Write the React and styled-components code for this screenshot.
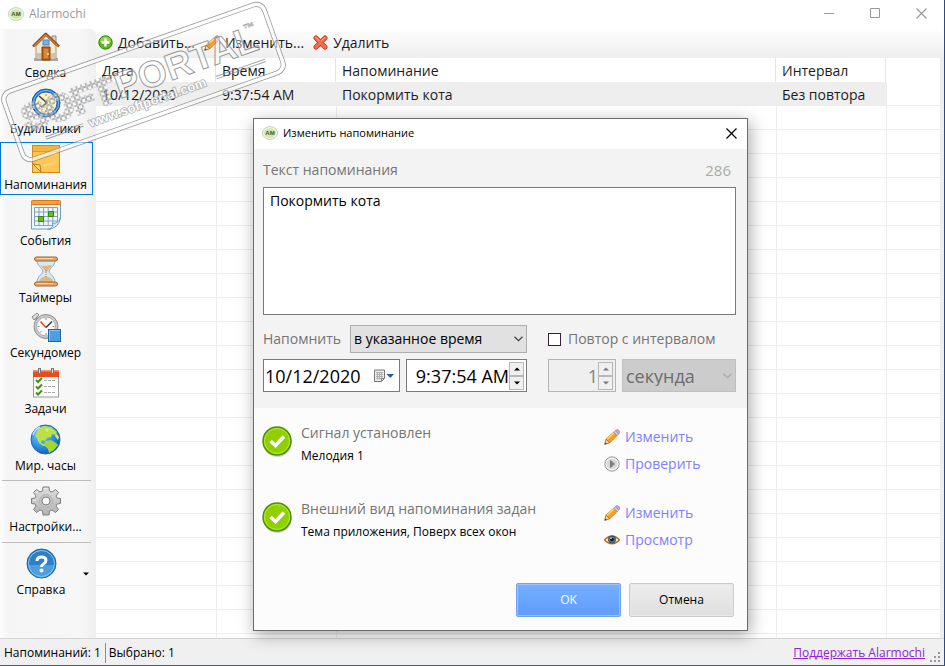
import React, { useState } from "react";
import styled, { createGlobalStyle } from "styled-components";

const GlobalStyle = createGlobalStyle`
  * {
    box-sizing: border-box;
  }
  body {
    margin: 0;
    font-family: "Open Sans", "Noto Sans", sans-serif;
    font-size: 14px;
    line-height: 20px;
    color: #1c1c1c;
  }
  button, input, select, textarea {
    font: inherit;
    color: inherit;
    margin: 0;
    border-radius: 0;
  }
  button {
    padding: 0;
    border: 0;
    background: none;
  }
  svg {
    display: block;
    flex: none;
  }
`;

const Window = styled.div`
  position: relative;
  display: flex;
  flex-direction: column;
  height: 100vh;
  overflow: hidden;
  background: #fff;
  border-right: 1px solid #2b4a87;
  border-bottom: 1px solid #2d6392;
`;

const TitleBar = styled.header`
  display: flex;
  align-items: center;
  height: 29px;
  padding: 0 0 2px 8px;
  gap: 5px;
  color: #999;
  background: #fff;

  h1 {
    flex: 1;
    margin: 0;
    font-size: 12px;
    font-weight: normal;
  }
`;

const WindowControls = styled.div`
  display: flex;
`;

const WindowButton = styled.button`
  display: flex;
  align-items: center;
  justify-content: center;
  width: 46px;
  height: 27px;
`;

const Body = styled.div`
  display: flex;
  flex: 1;
  min-height: 0;
`;

const Sidebar = styled.nav`
  display: flex;
  flex-direction: column;
  gap: 3px;
  width: 96px;
  padding: 1px 3px 0 0;
  border-top-right-radius: 6px;
  background: linear-gradient(90deg, #fdfdfd 0, #f5f5f5 8px, #f7f7f7 80px, #efefef 96px);
`;

const SideButton = styled.button`
  display: flex;
  align-items: center;
  height: 53px;
  font-size: 12px;
  line-height: 16px;
  color: #000;
  border: 1px solid ${(p) => (p.$active ? "#0078d7" : "transparent")};

  .main {
    display: flex;
    flex: 1;
    flex-direction: column;
    align-items: center;
    gap: 3px;
    padding-right: 2px;
  }
  .arrow {
    width: 9px;
    padding-top: 2px;
  }
`;

const SideDivider = styled.hr`
  width: 89px;
  height: 1px;
  margin: 2px 0 0 2px;
  border: 0;
  background: #bdbdbd;
`;

const Content = styled.main`
  display: flex;
  flex: 1;
  flex-direction: column;
  min-width: 0;
`;

const Toolbar = styled.div`
  display: flex;
  align-items: center;
  gap: 9px;
  height: 29px;
  padding: 0 2px 2px;
  background: linear-gradient(#fefefe, #eee);
`;

const ToolButton = styled.button`
  display: flex;
  align-items: center;
  gap: 5px;
  white-space: nowrap;
`;

const ListArea = styled.div`
  flex: 1;
  min-height: 0;
  overflow: hidden;
  margin-right: 4px;
  box-shadow: 4px 0 0 #eee;
`;

const ReminderTable = styled.table`
  width: 100%;
  table-layout: fixed;
  border-collapse: separate;
  border-spacing: 0;

  th, td {
    height: 24px;
    padding: 2px 6px 0;
    text-align: left;
    font-weight: normal;
    line-height: 20px;
    white-space: nowrap;
  }
  th:not(:last-child) {
    border-right: 1px solid #e5e5e5;
  }
  td {
    border-bottom: 1px solid #ededed;
  }
  td + td {
    border-left: 1px solid #ededed;
    padding-left: 5px;
  }
  tr.selected td:not(:last-child) {
    background: #eee;
  }
`;

const StatusBar = styled.footer`
  display: flex;
  align-items: center;
  height: 27px;
  padding: 2px 3px 0 4px;
  border-top: 1px solid #d4d4d4;
  background: #f0f0f0;
  font-size: 12px;
  color: #000;

  span + span {
    margin-left: 4px;
    padding-left: 3px;
    border-left: 1px solid #8c8c8c;
  }
  a {
    margin: 0 5px 0 auto;
    color: #9321dd;
  }
  svg {
    align-self: flex-end;
    margin-bottom: 2px;
  }
`;

const Dialog = styled.section`
  position: absolute;
  top: 118px;
  left: 253px;
  width: 495px;
  border: 1px solid #6c6c6c;
  background: #fcfcfc;
  box-shadow: 2px 4px 16px rgba(0, 0, 0, 0.35);
`;

const DialogTitle = styled.header`
  display: flex;
  align-items: center;
  gap: 5px;
  height: 30px;
  padding: 0 0 2px 8px;
  background: #fff;
  color: #000;

  h2 {
    flex: 1;
    margin: 0;
    font-size: 11px;
    font-weight: normal;
  }
  button {
    width: 30px;
    height: 28px;
    padding-left: 9px;
  }
`;

const DialogForm = styled.div`
  display: flex;
  flex-direction: column;
  height: 259px;
  padding: 11px 11px 0 9px;
  background: #f3f3f3;
`;

const FieldHead = styled.div`
  display: flex;
  justify-content: space-between;
  padding-right: 5px;
  color: #757575;

  output {
    font-size: 15px;
    color: #a7ada9;
  }
`;

const MessageBox = styled.textarea`
  height: 128px;
  margin: 7px 0 10px;
  padding: 3px 6px;
  border: 1px solid #7a7a7a;
  background: #fff;
  color: #000;
  resize: none;
  outline: 0;
`;

const FormGrid = styled.div`
  display: grid;
  grid-template-columns: 264px 1fr;
  column-gap: 21px;
  row-gap: 6px;
`;

const FormRow = styled.div`
  display: flex;
  align-items: center;
  justify-content: space-between;
  gap: 6px;
  color: #757575;
`;

const SelectWrap = styled.div`
  display: grid;
  flex: ${(p) => (p.$grow ? 1 : "none")};
  width: ${(p) => (p.$grow ? "auto" : "177px")};
  align-items: center;

  select, svg {
    grid-area: 1 / 1;
  }
  svg {
    justify-self: end;
    margin-right: 4px;
    pointer-events: none;
  }
`;

const Select = styled.select`
  appearance: none;
  width: 100%;
  height: ${(p) => (p.$large ? 33 : 28)}px;
  padding: 0 3px;
  border: 1px solid #adadad;
  background: #e1e1e1;
  color: #000;
  font-size: ${(p) => (p.$large ? 18 : 14)}px;
  outline: 0;

  &:disabled {
    border-color: #bfbfbf;
    background: #ccc;
    color: #6d6d6d;
    opacity: 1;
  }
`;

const CheckLabel = styled.label`
  display: flex;
  align-items: center;
  gap: 7px;
  white-space: nowrap;

  input {
    appearance: none;
    width: 13px;
    height: 13px;
    border: 1px solid #33203a;
    background: #fff;
  }
  input:checked {
    box-shadow: inset 0 0 0 2px #fff;
    background: #33203a;
  }
`;

const Field = styled.div`
  display: flex;
  align-items: center;
  width: ${(p) => p.$width}px;
  height: 33px;
  border: 1px solid ${(p) => (p.$disabled ? "#b5b5b5" : "#7a7a7a")};
  background: ${(p) => (p.$disabled ? "#efefef" : "#fff")};
  color: ${(p) => (p.$disabled ? "#858585" : "#000")};

  input {
    flex: 1;
    min-width: 0;
    height: 29px;
    padding: 0 0 0 1px;
    border: 0;
    background: none;
    font-size: 18px;
    text-align: ${(p) => p.$align || "left"};
    outline: 0;
  }
`;

const Spinner = styled.div`
  display: flex;
  flex-direction: column;
  margin-right: 2px;

  button {
    display: flex;
    align-items: center;
    justify-content: center;
    width: 15px;
    height: 14px;
    border: 1px solid #b8b8b8;
    background: #f0f0f0;
  }
`;

const DateButton = styled.button`
  display: flex;
  align-items: center;
  gap: 2px;
  margin-right: 5px;
`;

const Options = styled.div`
  display: flex;
  flex-direction: column;
  gap: 25px;
  padding: 15px 11px 0 8px;
`;

const Option = styled.div`
  display: grid;
  grid-template-columns: 31px 1fr 132px;
  column-gap: 8px;

  > svg {
    margin-top: 2px;
  }
  h3 {
    margin: 0;
    font-size: 14px;
    font-weight: normal;
    color: #757575;
  }
  p {
    margin: 4px 0 0;
    font-size: 12px;
    line-height: 18px;
    color: #000;
  }
`;

const Links = styled.div`
  display: flex;
  flex-direction: column;
  gap: 7px;
  padding-top: 4px;

  a {
    display: flex;
    align-items: center;
    gap: 5px;
    color: #8080ff;
    text-decoration: none;
  }
`;

const Actions = styled.div`
  display: flex;
  justify-content: flex-end;
  gap: 8px;
  padding: 33px 13px 13px;
`;

const ActionButton = styled.button`
  width: 105px;
  height: 34px;
  border: 1px solid ${(p) => (p.$primary ? "#6fa3ea" : "#cacaca")};
  border-radius: 2px;
  background: ${(p) => (p.$primary ? "linear-gradient(#75b0ff, #609bff)" : "linear-gradient(#eee, #dedede)")};
  box-shadow: inset 0 0 0 1px ${(p) => (p.$primary ? "#9cc5ff" : "#e9e9e9")};
  color: ${(p) => (p.$primary ? "#fff" : "#000")};
  font-size: 12px;
`;

const WatermarkLayer = styled.svg`
  position: absolute;
  top: 0;
  left: 0;
  pointer-events: none;
`;

const AppBadge = () => (
  <svg width="16" height="14" viewBox="0 0 16 14" aria-hidden="true">
    <ellipse cx="8" cy="7" rx="7.5" ry="6.4" fill="#f3f7ea" stroke="#c9ccc4" />
    <ellipse cx="8" cy="7" rx="6" ry="4.8" fill="#cfeaa4" />
    <text x="8" y="9.2" textAnchor="middle" fontFamily="Liberation Sans, sans-serif" fontSize="6" fontWeight="bold" fill="#43543a">AM</text>
  </svg>
);

const HomeIcon = () => (
  <svg width="30" height="30" viewBox="0 0 30 30">
    <path d="M21 4h4v8l-4-4z" fill="#d8d4cc" stroke="#8b8b86" />
    <path d="M3 26h24v3H3z" fill="#aaa9a5" />
    <path d="M5 14 15 4l10 10v13H5z" fill="#f4ead2" stroke="#a5957b" />
    <path d="M2 14.5 14.6 1.8 28 14.5" fill="none" stroke="#a35112" strokeWidth="2.600" strokeLinejoin="round" />
    <path d="M3 14 14.6 2.5 27 14" fill="none" stroke="#dc8a3c" />
    <rect x="12" y="8" width="6" height="5" fill="#75b6eb" stroke="#4d87bf" />
    <path d="M11 28V15h8v13z" fill="#bf6b20" stroke="#783c0c" />
    <path d="M13 17h4v9h-4z" fill="#d88b38" />
    <circle cx="17" cy="22" r="1" fill="#ffe086" />
    <path d="M6 21h4v6H6zM20 21h4v6h-4z" fill="#ccc4ae" />
  </svg>
);

const ClockIcon = () => (
  <svg width="30" height="30" viewBox="0 0 30 30">
    <circle cx="15" cy="15" r="14" fill="#2173c6" stroke="#185a9f" />
    <circle cx="15" cy="15" r="12.6" fill="none" stroke="#7dbef2" />
    <circle cx="15" cy="15" r="11" fill="#fbf1c8" stroke="#2a67a7" />
    <path d="M15 6v2M15 22v2M6 15h2M22 15h2M19.5 7.5l-1 1.7M22.5 10.5l-1.7 1M22.5 19.5l-1.7-1M19.5 22.5l-1-1.7M10.500 22.500l1-1.700M7.500 19.500l1.700-1" stroke="#9b8c5b" />
    <path d="m8 8 7 6 1 1-6 4" fill="none" stroke="#434343" strokeWidth="1.5" />
    <circle cx="15.500" cy="14.500" r="1.500" fill="#333" />
  </svg>
);

const NoteIcon = () => (
  <svg width="30" height="30" viewBox="0 0 30 30">
    <rect x="1.500" y="1.500" width="27" height="27" fill="#ffc653" stroke="#cf8a23" />
    <path d="M2 2h26v5H2z" fill="#f5b43d" />
    <path d="M2 7.500h26" stroke="#e09e2b" />
    <path d="m2 20 8 8M2 20l7 1 1 7" fill="#ffd987" stroke="#c27b18" />
    <path d="m7 12 19-2M12 22l13-4" stroke="#ffd67a" strokeWidth="2" />
  </svg>
);

const CalendarIcon = () => (
  <svg width="30" height="30" viewBox="0 0 30 30">
    <path d="M.5 4h29v25H.5z" fill="#eef7fd" stroke="#6e9cbe" />
    <rect x=".5" y=".5" width="29" height="4" rx="1" fill="#f7a33c" stroke="#d87915" />
    <path d="M3.500 7.500h23v18h-23zM3.500 12h23M3.500 16.500h23M3.500 21h23M8 7.500v18M12.600 7.500v18M17.200 7.500v18M21.800 7.500v18" fill="none" stroke="#82a1bd" />
    <path d="M17.500 11.500h5v5h-5zM7.500 16.500h5v5h-5z" fill="#68bd17" stroke="#378a04" />
    <path d="M30 17v13H17c5-1 6-4 5-7 3 1 7-1 8-6z" fill="#fff" />
    <path d="M29.500 17c-1 5-5 7-8 6 1 3-1 6-5 6.500C24 29 29 24 29.500 17z" fill="#d8eaf8" stroke="#6b9bc3" />
  </svg>
);

const HourglassIcon = () => (
  <svg width="30" height="31" viewBox="0 0 30 31">
    <path d="M6 4h18c0 6-5 8-6 11 1 4 6 5 6 12H6c0-7 5-8 6-12-1-3-6-5-6-11z" fill="#d4eaf9" stroke="#8baeca" />
    <path d="M9 9c4 2 8 0 12 0-1 3-4 4-5 7h-2c0-3-4-5-5-7zM8 26c0-4 5-5 7-6 2 1 7 2 7 6z" fill="#deb785" />
    <path d="M15 14v8" stroke="#b6844f" strokeDasharray="1 1" />
    <rect x="3.500" y="1" width="23" height="4" rx="2" fill="#e2a86b" stroke="#a6622c" />
    <rect x="3.500" y="26" width="23" height="4" rx="2" fill="#e2a86b" stroke="#a6622c" />
    <path d="M6 2.500h16M6 27.500h16" stroke="#ffd7a2" />
  </svg>
);

const StopwatchIcon = () => (
  <svg width="30" height="30" viewBox="0 0 30 30">
    <path d="m1 5 5-4 2 2-5 5z" fill="#ddd" stroke="#8c8c8c" />
    <path d="m5 6 4 4" stroke="#8d8d8d" strokeWidth="3" />
    <circle cx="15" cy="14.500" r="12" fill="#ccc" stroke="#8b8b8b" />
    <circle cx="15" cy="14.500" r="9.500" fill="#fafafa" stroke="#aaa" />
    <path d="M15 6v2M15 21v2M6.500 14.500h2M21.500 14.500h2M9 20.500l1.500-1.500" stroke="#888" />
    <path d="m9.500 9.500 5.500 6" stroke="#e34a18" strokeWidth="1.500" />
    <path d="m15 15.500 6-6" stroke="#333" strokeWidth="1.500" />
    <rect x="17.500" y="17.500" width="12" height="12" fill="#4f9de2" stroke="#1c65a9" />
    <path d="M18.500 28.500v-10h10" fill="none" stroke="#87c4f4" />
  </svg>
);

const TasksIcon = () => (
  <svg width="28" height="30" viewBox="0 0 28 30">
    <rect x="1.500" y="3" width="25" height="26" fill="#fcfcfc" stroke="#9a9a9a" />
    <path d="M1 2.500h26V9H1z" fill="#ee4a19" />
    <path d="M1 3h26" stroke="#ff9e75" />
    <path d="M7.500 0v6M20.500 0v6" stroke="#777" strokeWidth="3" />
    <path d="M7.500 1v4M20.500 1v4" stroke="#ddd" />
    <path d="m4 12 2 2 4-4M4 18.500l2 2 4-4M4 24.500l2 2 4-4" fill="none" stroke="#438f16" strokeWidth="2" />
    <path d="M12 12.500h12M12 18.500h12M12 24.500h12" stroke="#aaa" strokeDasharray="3 1" />
  </svg>
);

const GlobeIcon = () => (
  <svg width="31" height="31" viewBox="0 0 31 31">
    <defs>
      <radialGradient id="ocean" cx=".35" cy=".3" r=".75">
        <stop offset="0" stopColor="#80ccff" />
        <stop offset=".55" stopColor="#2f97e8" />
        <stop offset="1" stopColor="#1158ae" />
      </radialGradient>
    </defs>
    <circle cx="15.500" cy="15.500" r="14.500" fill="url(#ocean)" stroke="#2066b0" />
    <path d="m8 5 6-3 7 1 6 5-2 3-3-1-1 3-4 1-2 3-3-1-1 3 3 1 2 2-3 0-4-3-2-5-2-2z" fill="#bde04a" />
    <path d="m15 17 6-1 5 3 2 2-4 5-5 3-1-4-4-4z" fill="#a6d62f" />
    <path d="m26 9 3 4-1 3-3-4zM17 4l2 2-2 2-2-2z" fill="#d7ec6c" />
    <path d="M3 11Q5 5 10 3" fill="none" stroke="#b6e3ff" strokeWidth="1.500" />
  </svg>
);

const GearIcon = () => (
  <svg width="30" height="30" viewBox="0 0 30 30">
    <defs>
      <linearGradient id="steel" x2="0" y2="1">
        <stop stopColor="#ddd" />
        <stop offset="1" stopColor="#b2b2b2" />
      </linearGradient>
    </defs>
    <path d="M12 1h6l.5 4 2.500 1 3.500-2.500 3 3L25 10l1 2 3.500.500v5L26 18l-1 2 2.500 3.500-3 3L21 24l-2.500 1-.5 4h-6l-.5-4L9 24l-3.500 2.500-3-3L5 20l-1-2-3.500-.5v-5L4 12l1-2-2.500-3.500 3-3L9 6l2.500-1z" fill="url(#steel)" stroke="#808080" />
    <circle cx="15" cy="15" r="6.500" fill="#c4c4c4" stroke="#b5b5b5" />
    <circle cx="15" cy="15" r="4" fill="#f7f7f7" stroke="#808080" />
    <path d="M12.500 2.500h4M5 7l2-2M2 14.500l3-.5" stroke="#eee" />
  </svg>
);

const HelpIcon = () => (
  <svg width="31" height="31" viewBox="0 0 31 31">
    <circle cx="15.500" cy="15.500" r="14.500" fill="#2d7fc7" stroke="#1c61a4" />
    <path d="M3 17a12.500 12.500 0 0 0 25 0z" fill="#4f9edc" />
    <circle cx="15.500" cy="15.500" r="13" fill="none" stroke="#8bcaf4" />
    <path d="M11 13q0-4 4.500-4t4.500 3.500q0 2-2.500 3.500-2 1-2 3" fill="none" stroke="#fff" strokeWidth="3" />
    <circle cx="15.500" cy="22.500" r="2" fill="#fff" />
  </svg>
);

const AddIcon = () => (
  <svg width="15" height="15" viewBox="0 0 15 15">
    <circle cx="7.500" cy="7.500" r="6.700" fill="#61b51d" stroke="#388604" />
    <path d="M2 7a5.500 5.500 0 0 1 11 0z" fill="#8ed446" />
    <path d="M7.500 3.500v8M3.500 7.500h8" stroke="#fff" strokeWidth="2.500" />
  </svg>
);

const PencilIcon = () => (
  <svg width="16" height="16" viewBox="0 0 16 16">
    <path d="m2 10 3.800 3.800L.8 15.300z" fill="#f2d1a0" stroke="#79532d" strokeWidth=".7" />
    <path d="m2 10 7.800-7 3.400 3.400-7.400 7.400z" fill="#ff9d1c" stroke="#b9660b" strokeWidth=".7" />
    <path d="m3 10.300 7.200-6.500" stroke="#ffd97c" strokeWidth="1.300" />
    <path d="m9.800 3 1.500-1.300L14.700 5l-1.500 1.400z" fill="#d5d8e0" stroke="#808590" strokeWidth=".6" />
    <path d="m11.300 1.700 1.200-1q1-.5 1.800.300l1 1q.8 1 .3 1.800L14.700 5z" fill="#dc9cc4" stroke="#a4709d" strokeWidth=".6" />
    <path d="m.5 15.500.6-2 1.400 1.400z" fill="#333" />
  </svg>
);

const DeleteIcon = () => (
  <svg width="15" height="15" viewBox="0 0 15 15">
    <path d="m3 3 9 9M12 3l-9 9" stroke="#b83e27" strokeWidth="5" strokeLinecap="round" />
    <path d="m3 3 9 9M12 3l-9 9" stroke="#f36b4e" strokeWidth="3.500" strokeLinecap="round" />
    <path d="m2.500 2 4 4M12 2 8.500 5.500" stroke="#ffac91" />
  </svg>
);

const OkIcon = () => (
  <svg width="31" height="33" viewBox="0 0 31 33">
    <ellipse cx="15.500" cy="18" rx="14" ry="14" fill="#d3d3d3" />
    <circle cx="15" cy="16" r="14" fill="#91d000" stroke="#4f9100" strokeWidth="1.500" />
    <circle cx="15" cy="16" r="12.500" fill="none" stroke="#b5e455" />
    <path d="m8.500 16 5 4.500 8.500-9" fill="none" stroke="#fff" strokeWidth="3.500" />
  </svg>
);

const PlayIcon = () => (
  <svg width="16" height="16" viewBox="0 0 16 16">
    <circle cx="8" cy="8" r="7.200" fill="#e4e4e4" stroke="#999" />
    <circle cx="8" cy="8" r="5.800" fill="#d8d8d8" stroke="#fafafa" />
    <path d="m6.500 4.500 4 3.500-4 3.500z" fill="#828282" stroke="#666" strokeWidth=".7" />
  </svg>
);

const EyeIcon = () => (
  <svg width="16" height="12" viewBox="0 0 16 12">
    <path d="M.5 6Q8-2 15.500 6 8 13.500.5 6z" fill="#f8f5eb" stroke="#b86d21" strokeWidth="1.300" />
    <circle cx="8" cy="5.500" r="3.600" fill="#547a9c" stroke="#324a64" />
    <circle cx="8" cy="5.500" r="1.800" fill="#111" />
    <circle cx="7" cy="4.300" r=".8" fill="#fff" />
  </svg>
);

const CloseGlyph = () => (
  <svg width="11" height="11" viewBox="0 0 11 11">
    <path d="m.5.5 10 10M10.500.5l-10 10" stroke="currentColor" strokeWidth="1.200" />
  </svg>
);

const Chevron = ({ color }) => (
  <svg width="9" height="6" viewBox="0 0 9 6">
    <path d="m.5.7 4 4 4-4" fill="none" stroke={color} strokeWidth="1.300" />
  </svg>
);

const Arrow = ({ up, color = "#000" }) => (
  <svg width="6" height="4" viewBox="0 0 6 4">
    <path d={up ? "M0 3.500h6L3 .5z" : "M0 .5h6L3 3.500z"} fill={color} />
  </svg>
);

const DateGlyph = () => (
  <svg width="20" height="13" viewBox="0 0 20 13">
    <path d="M.5 1h10v8.500l-3 3h-7z" fill="#ececec" stroke="#777" />
    <path d="M2 3.500h7M2 5.500h7M2 7.500h7M2 9.500h5M3.500 3v7.500M5.500 3v7.500M7.500 3v6" stroke="#a5a5a5" strokeWidth=".8" />
    <path d="M7.500 12V9.500H10" fill="none" stroke="#777" />
    <path d="M12.500 5H20l-3.700 4z" fill="#1f5f9e" />
  </svg>
);

const Watermark = () => (
  <WatermarkLayer width="300" height="170" viewBox="0 0 300 170" aria-hidden="true">
    <defs>
      <pattern id="tiles" width="5" height="5" patternUnits="userSpaceOnUse">
        <rect x=".5" y=".5" width="4" height="4" rx="1" fill="#fafafa" fillOpacity=".5" stroke="#8a8a8a" strokeWidth=".7" />
      </pattern>
    </defs>
    <g transform="translate(143.500 82) rotate(-19.500)" fontFamily="Liberation Sans, sans-serif" fontWeight="bold" opacity=".8">
      <g fill="none" stroke="#8d8d8d">
        <rect x="-140" y="-38" width="280" height="76" rx="10" />
        <rect x="-136" y="-34" width="272" height="68" rx="7" />
        <rect x="-138" y="-36" width="276" height="72" rx="9" stroke="#fff" strokeOpacity=".75" strokeWidth="3" />
      </g>
      <text x="-126" y="8" fontSize="36" fill="url(#tiles)" stroke="url(#tiles)" strokeWidth="4">SOFT</text>
      <g fill="#fff" fillOpacity=".5" stroke="#858585">
        <text x="-28" y="8" fontSize="37">PORTAL</text>
        <text x="112" y="-12" fontSize="12" strokeWidth=".5">™</text>
      </g>
      <text x="-65" y="25" fontSize="13" fill="#fff" stroke="#999" strokeWidth="1.500" paintOrder="stroke">www.softportal.com</text>
      <path d="M-111 19h40M70 19h52M-111 21.500h40M70 21.500h52" stroke="#8d8d8d" />
    </g>
  </WatermarkLayer>
);

const sections = [
  { label: "Сводка", icon: <HomeIcon /> },
  { label: "Будильники", icon: <ClockIcon /> },
  { label: "Напоминания", icon: <NoteIcon /> },
  { label: "События", icon: <CalendarIcon /> },
  { label: "Таймеры", icon: <HourglassIcon /> },
  { label: "Секундомер", icon: <StopwatchIcon /> },
  { label: "Задачи", icon: <TasksIcon /> },
  { label: "Мир. часы", icon: <GlobeIcon /> },
];

const SideItem = ({ label, icon, active, arrow, onClick }) => (
  <SideButton $active={active} onClick={onClick}>
    <span className="main">
      {icon}
      {label}
    </span>
    {arrow && (
      <span className="arrow">
        <Arrow />
      </span>
    )}
  </SideButton>
);

const ReminderList = () => (
  <ListArea>
    <ReminderTable>
      <colgroup>
        <col width="120" />
        <col width="120" />
        <col width="440" />
        <col width="110" />
        <col />
      </colgroup>
      <thead>
        <tr>
          <th>Дата</th>
          <th>Время</th>
          <th>Напоминание</th>
          <th>Интервал</th>
          <th />
        </tr>
      </thead>
      <tbody>
        <tr className="selected">
          <td>10/12/2020</td>
          <td>9:37:54 AM</td>
          <td>Покормить кота</td>
          <td>Без повтора</td>
          <td />
        </tr>
        {Array.from({ length: 40 }, (_, i) => (
          <tr key={i}>
            <td />
            <td />
            <td />
            <td />
            <td />
          </tr>
        ))}
      </tbody>
    </ReminderTable>
  </ListArea>
);

const Spin = ({ disabled }) => (
  <Spinner>
    <button aria-label="Больше" disabled={disabled}>
      <Arrow up color={disabled ? "#777" : "#000"} />
    </button>
    <button aria-label="Меньше" disabled={disabled}>
      <Arrow color={disabled ? "#777" : "#000"} />
    </button>
  </Spinner>
);

const ReminderDialog = () => {
  const [text, setText] = useState("Покормить кота");
  const [repeat, setRepeat] = useState(false);

  return (
    <Dialog role="dialog" aria-labelledby="dialog-title">
      <DialogTitle>
        <AppBadge />
        <h2 id="dialog-title">Изменить напоминание</h2>
        <button aria-label="Закрыть">
          <CloseGlyph />
        </button>
      </DialogTitle>
      <DialogForm>
        <FieldHead>
          <label htmlFor="message">Текст напоминания</label>
          <output>{300 - text.length}</output>
        </FieldHead>
        <MessageBox id="message" value={text} onChange={(e) => setText(e.target.value)} />
        <FormGrid>
          <FormRow>
            <label htmlFor="mode">Напомнить</label>
            <SelectWrap>
              <Select id="mode">
                <option>в указанное время</option>
              </Select>
              <Chevron color="#444" />
            </SelectWrap>
          </FormRow>
          <FormRow>
            <CheckLabel>
              <input type="checkbox" checked={repeat} onChange={() => setRepeat(!repeat)} />
              Повтор с интервалом
            </CheckLabel>
          </FormRow>
          <FormRow>
            <Field $width={137}>
              <input aria-label="Дата" defaultValue="10/12/2020" />
              <DateButton aria-label="Выбрать дату">
                <DateGlyph />
              </DateButton>
            </Field>
            <Field $width={121} $align="right">
              <input aria-label="Время" defaultValue="9:37:54 AM" />
              <Spin />
            </Field>
          </FormRow>
          <FormRow>
            <Field $width={68} $align="right" $disabled={!repeat}>
              <input aria-label="Интервал" defaultValue="1" disabled={!repeat} />
              <Spin disabled={!repeat} />
            </Field>
            <SelectWrap $grow>
              <Select $large aria-label="Единица" disabled={!repeat}>
                <option>секунда</option>
              </Select>
              <Chevron color="#aaa" />
            </SelectWrap>
          </FormRow>
        </FormGrid>
      </DialogForm>
      <Options>
        <Option>
          <OkIcon />
          <div>
            <h3>Сигнал установлен</h3>
            <p>Мелодия 1</p>
          </div>
          <Links>
            <a href="#sound"><PencilIcon />Изменить</a>
            <a href="#test"><PlayIcon />Проверить</a>
          </Links>
        </Option>
        <Option>
          <OkIcon />
          <div>
            <h3>Внешний вид напоминания задан</h3>
            <p>Тема приложения, Поверх всех окон</p>
          </div>
          <Links>
            <a href="#view"><PencilIcon />Изменить</a>
            <a href="#preview"><EyeIcon />Просмотр</a>
          </Links>
        </Option>
      </Options>
      <Actions>
        <ActionButton $primary>OK</ActionButton>
        <ActionButton>Отмена</ActionButton>
      </Actions>
    </Dialog>
  );
};

export default function App() {
  const [section, setSection] = useState(2);

  return (
    <>
      <GlobalStyle />
      <Window>
        <TitleBar>
          <AppBadge />
          <h1>Alarmochi</h1>
          <WindowControls>
            <WindowButton aria-label="Свернуть">
              <svg width="11" height="11"><path d="M0 5.500h10" stroke="#999" /></svg>
            </WindowButton>
            <WindowButton aria-label="Развернуть">
              <svg width="11" height="11"><path d="M.5.5h9v9h-9z" fill="none" stroke="#999" /></svg>
            </WindowButton>
            <WindowButton aria-label="Закрыть">
              <CloseGlyph />
            </WindowButton>
          </WindowControls>
        </TitleBar>
        <Body>
          <Sidebar>
            {sections.map((s, i) => (
              <SideItem key={s.label} {...s} active={i === section} onClick={() => setSection(i)} />
            ))}
            <SideDivider />
            <SideItem label="Настройки..." icon={<GearIcon />} />
            <SideDivider />
            <SideItem label="Справка" icon={<HelpIcon />} arrow />
          </Sidebar>
          <Content>
            <Toolbar>
              <ToolButton><AddIcon />Добавить...</ToolButton>
              <ToolButton><PencilIcon />Изменить...</ToolButton>
              <ToolButton><DeleteIcon />Удалить</ToolButton>
            </Toolbar>
            <ReminderList />
          </Content>
        </Body>
        <StatusBar>
          <span>Напоминаний: 1</span>
          <span>Выбрано: 1</span>
          <a href="#donate">Поддержать Alarmochi</a>
          <svg width="11" height="11" viewBox="0 0 11 11" fill="#999">
            <path d="M8 0h2v2H8zM8 4h2v2H8zM8 8h2v2H8zM4 4h2v2H4zM4 8h2v2H4zM0 8h2v2H0z" />
          </svg>
        </StatusBar>
        <Watermark />
        <ReminderDialog />
      </Window>
    </>
  );
}
